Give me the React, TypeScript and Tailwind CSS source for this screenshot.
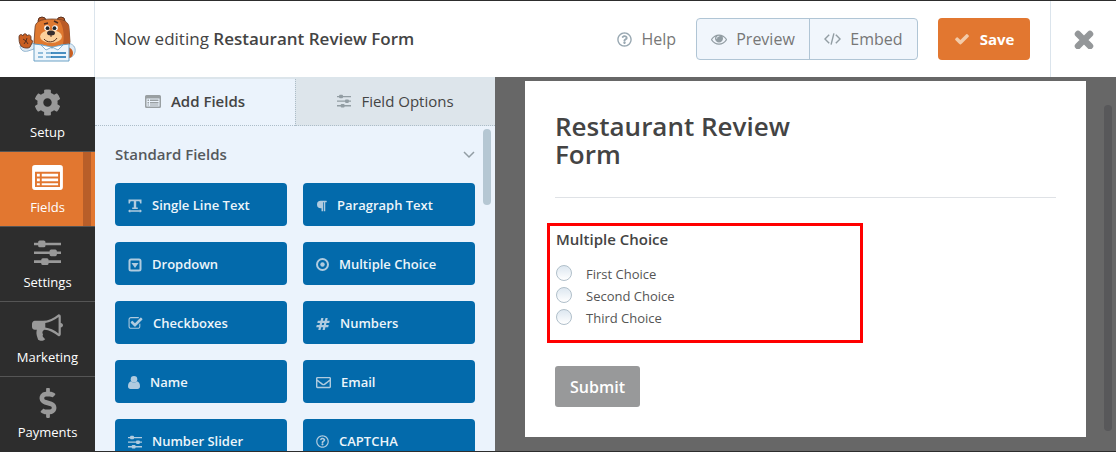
import type { ReactNode } from "react";
import { FaCog, FaDollarSign, FaParagraph, FaRegEnvelope, FaRegQuestionCircle } from "react-icons/fa";

function Glyph({ d, className }: { d: string; className: string }) {
  return (
    <svg viewBox="0 0 1792 1792" fill="currentColor" className={className} aria-hidden="true">
      <path d={d} />
    </svg>
  );
}

const EYE =
  "M1664 960q-152-236-381-353 61 104 61 225 0 185-131.5 316.5t-316.5 131.5-316.5-131.5-131.5-316.5q0-121 61-225-229 117-381 353 133 205 333.5 326.5t434.5 121.5 434.5-121.5 333.5-326.5zm-720-384q0-20-14-34t-34-14q-125 0-214.5 89.5t-89.5 214.5q0 20 14 34t34 14 34-14 14-34q0-86 61-147t147-61q20 0 34-14t14-34zm848 384q0 34-20 69-140 230-376.5 368.5t-499.5 138.5-499.5-139-376.5-368q-20-35-20-69t20-69q140-229 376.5-368t499.5-139 499.5 139 376.5 368q20 35 20 69z";
const CHECK =
  "M1671 566q0 40-28 68l-724 724-136 136q-28 28-68 28t-68-28l-136-136-362-362q-28-28-28-68t28-68l136-136q28-28 68-28t68 28l294 295 656-657q28-28 68-28t68 28l136 136q28 28 28 68z";
const CHECK_SQUARE =
  "M1472 930v318q0 119-84.5 203.5t-203.5 84.5h-832q-119 0-203.5-84.5t-84.5-203.5v-832q0-119 84.5-203.5t203.5-84.5h832q63 0 117 25 15 7 18 23 3 17-9 29l-49 49q-10 10-23 10-3 0-9-2-23-6-45-6h-832q-66 0-113 47t-47 113v832q0 66 47 113t113 47h832q66 0 113-47t47-113v-254q0-13 9-22l64-64q10-10 23-10 6 0 12 3 20 8 20 29zm231-489l-814 814q-24 24-57 24t-57-24l-430-430q-24-24-24-57t24-57l110-110q24-24 57-24t57 24l263 263 647-647q24-24 57-24t57 24l110 110q24 24 24 57t-24 57z";
const BULLHORN =
  "M1664 640q53 0 90.5 37.5t37.5 90.5-37.5 90.5-90.5 37.5v384q0 52-38 90t-90 38q-417-347-812-380-58 19-91 66t-31 100.5 40 92.5q-20 33-23 65.5t6 58 33.5 55 48 50 61.5 50.5q-29 58-111.5 83t-168.5 11.5-132-55.5q-7-23-29.5-87.5t-32-94.5-23-89-15-101 3.5-98.5 22-110.5h-122q-66 0-113-47t-47-113v-192q0-66 47-113t113-47h480q435 0 896-384 52 0 90 38t38 90v384zm-128 604v-954q-394 302-768 343v270q377 42 768 341z";
const HASH =
  "M991 1024l64-256h-254l-64 256h254zm768-504l-56 224q-7 24-31 24h-327l-64 256h311q15 0 25 12 10 14 6 28l-56 224q-5 24-31 24h-327l-81 328q-7 24-31 24h-224q-16 0-26-12-9-12-6-28l78-312h-254l-81 328q-7 24-31 24h-225q-15 0-25-12-9-12-6-28l78-312h-311q-15 0-25-12-9-12-6-28l56-224q7-24 31-24h327l64-256h-311q-15 0-25-12-10-14-6-28l56-224q5-24 31-24h327l81-328q7-24 32-24h224q15 0 25 12 9 12 6 28l-78 312h254l81-328q7-24 32-24h224q15 0 25 12 9 12 6 28l-78 312h311q15 0 25 12 9 12 6 28z";

function Cross({ className }: { className: string }) {
  return (
    <svg viewBox="0 0 20 20" className={className} aria-hidden="true">
      <path d="M4 5l12 12M16 5L4 17" stroke="currentColor" strokeWidth="6.5" strokeLinecap="round" />
    </svg>
  );
}

function Sliders({ className }: { className: string }) {
  return (
    <svg viewBox="0 0 26 26" fill="currentColor" className={className} aria-hidden="true">
      <path d="M0 3.500h26v2.500H0zM0 12h26v2.500H0zM0 20.500h26v2.500H0z" />
      <rect x="4" y="1.500" width="7" height="6.500" rx="1.500" />
      <rect x="15" y="10" width="7" height="6.500" rx="1.500" />
      <rect x="7" y="18.500" width="7" height="6.500" rx="1.500" />
    </svg>
  );
}

function ListWindow({ className }: { className: string }) {
  return (
    <svg viewBox="0 0 32 26" fill="currentColor" className={className} aria-hidden="true">
      <path
        fillRule="evenodd"
        d="M3 0h26a3 3 0 0 1 3 3v20a3 3 0 0 1-3 3H3a3 3 0 0 1-3-3V3a3 3 0 0 1 3-3zM3 7v16h26V7z"
      />
      <path d="M5 9h3v3H5zM10 9h17v3H10zM5 14h3v3H5zM10 14h17v3H10zM5 19h3v2H5zM10 19h17v2H10z" />
    </svg>
  );
}

function TextGlyph({ className }: { className: string }) {
  return (
    <svg viewBox="0 0 14 14" fill="currentColor" className={className} aria-hidden="true">
      <path d="M0.500 0.500H13.500V4.500H12.200L11.400 2.200H8.200V8.500H9.800V10H4.200V8.500H5.800V2.200H2.600L1.800 4.500H0.500z" />
      <path d="M0 12l2.200-1.800v1.100h9.600v-1.100L14 12l-2.200 1.800v-1.100H2.200v1.100z" />
    </svg>
  );
}

function DropdownGlyph({ className }: { className: string }) {
  return (
    <svg viewBox="0 0 14 14" className={className} aria-hidden="true">
      <rect x="1.500" y="1.500" width="11" height="11" rx="1.500" fill="none" stroke="currentColor" strokeWidth="2" />
      <path d="M3.500 5h7L7 10z" fill="currentColor" />
    </svg>
  );
}

function RadioGlyph({ className }: { className: string }) {
  return (
    <svg viewBox="0 0 13 13" className={className} aria-hidden="true">
      <circle cx="6.500" cy="6.500" r="5.500" fill="none" stroke="currentColor" strokeWidth="2" />
      <circle cx="6.500" cy="6.500" r="2.200" fill="currentColor" />
    </svg>
  );
}

function Person({ className }: { className: string }) {
  return (
    <svg viewBox="0 0 12 13" fill="currentColor" className={className} aria-hidden="true">
      <circle cx="6" cy="3.300" r="3.300" />
      <path d="M3 5.300C1 5.700 0 8 0 10.300 0 12 1 13 2.500 13h7c1.500 0 2.500-1 2.500-2.700C12 8 11 5.700 9 5.300 7.300 7 4.700 7 3 5.300z" />
    </svg>
  );
}

function Code({ className }: { className: string }) {
  return (
    <svg viewBox="0 0 18 14" fill="none" stroke="currentColor" strokeWidth="1.500" className={className} aria-hidden="true">
      <path d="M5.500 2.500L1 7l4.500 4.500M12.500 2.500L17 7l-4.500 4.500M10.500 1l-3 12" />
    </svg>
  );
}

function BearLogo() {
  return (
    <svg viewBox="0 0 58 46" className="h-[46px] w-[58px]" role="img" aria-label="WPForms">
      <path d="M2 30c1 5 4 6 8 5l6-2 2-6z" fill="#dfeaf3" stroke="#7ba6c6" strokeWidth=".8" />
      <path d="M50 27c5 1 8 4 7 9-1 4-4 6-8 6z" fill="#dfeaf3" stroke="#7ba6c6" strokeWidth=".8" />
      <path d="M50 31c3 1 5 3 5 6s-2 5-5 5z" fill="#c95f22" />
      <path d="M1 21c0-3 3-3 4-1 0-3 4-3 4 0 1-2 4-1 4 1v3c2 0 2 2 1 3l-2 4c-2 2-7 1-9-1-2-3-2-6-2-9z" fill="#c95f22" stroke="#573020" strokeWidth=".8" />
      <path d="M5 23l3 2-2 3M9 22l-1 3 2 3" fill="none" stroke="#573020" />
      <circle cx="24" cy="5" r="4" fill="#b75a27" stroke="#573020" />
      <circle cx="43" cy="5" r="4" fill="#b75a27" stroke="#573020" />
      <path d="M17 12c0-6 5-9 17-9s17 3 17 9l1 14c-1 5-7 8-18 8s-18-3-18-8z" fill="#df7930" stroke="#6b3c25" strokeWidth=".8" />
      <path d="M41 4c7 1 10 4 10 8l1 14c-1 3-4 5-8 6 3-9 2-22-3-28z" fill="#b95b27" />
      <ellipse cx="33" cy="20.500" rx="11" ry="6.500" fill="#fbd09a" />
      <circle cx="29" cy="12" r="2.800" fill="#fff" />
      <circle cx="37" cy="12" r="2.800" fill="#fff" />
      <circle cx="29.500" cy="12.200" r="1.900" fill="#20262b" />
      <circle cx="36.500" cy="12.200" r="1.900" fill="#20262b" />
      <path d="M26 8l4-1M36 5l4 2" stroke="#4b2b1f" strokeWidth="1.500" />
      <ellipse cx="33" cy="17" rx="4" ry="2.500" fill="#342c2d" />
      <path d="M33 19v2M26 23c3 4 10 4 13-1" fill="none" stroke="#573020" />
      <path d="M16 28l9 1 9 3 9-3 8-1v17H16z" fill="#edf5fb" stroke="#6aa1c6" />
      <path d="M23 29l5 5 6-3 6 3 5-5-11 2z" fill="#fff" stroke="#6aa1c6" strokeWidth=".8" />
      <path d="M20 37h5M20 41h5M28 37h6M28 41h6" stroke="#72a9cf" strokeWidth="1.300" />
      <path d="M33 37h15M33 41h15" stroke="#126daf" strokeWidth="1.500" />
    </svg>
  );
}

type NavItem = { label: string; icon: ReactNode; active?: boolean };

const navItems: NavItem[] = [
  { label: "Setup", icon: <FaCog className="size-[27px]" /> },
  { label: "Fields", icon: <ListWindow className="h-[25px] w-[31px]" />, active: true },
  { label: "Settings", icon: <Sliders className="size-[27px]" /> },
  { label: "Marketing", icon: <Glyph d={BULLHORN} className="size-[31px]" /> },
  { label: "Payments", icon: <FaDollarSign className="h-[30px] w-[18px]" /> },
];

const fields: { label: string; icon: ReactNode }[] = [
  { label: "Single Line Text", icon: <TextGlyph className="size-[14px]" /> },
  { label: "Paragraph Text", icon: <FaParagraph className="h-3 w-[11px]" /> },
  { label: "Dropdown", icon: <DropdownGlyph className="size-[14px]" /> },
  { label: "Multiple Choice", icon: <RadioGlyph className="size-[13px]" /> },
  { label: "Checkboxes", icon: <Glyph d={CHECK_SQUARE} className="size-[15px]" /> },
  { label: "Numbers", icon: <Glyph d={HASH} className="size-[14px]" /> },
  { label: "Name", icon: <Person className="h-[13px] w-3" /> },
  { label: "Email", icon: <FaRegEnvelope className="size-[15px]" /> },
  { label: "Number Slider", icon: <Sliders className="size-[14px]" /> },
  { label: "CAPTCHA", icon: <FaRegQuestionCircle className="size-[13px]" /> },
];

const choices = ["First Choice", "Second Choice", "Third Choice"];

function Header() {
  return (
    <header className="flex h-[76px] shrink-0 items-stretch bg-white">
      <div className="flex w-[95px] shrink-0 items-center justify-center border-r border-[#dbe4ec]">
        <BearLogo />
      </div>
      <h1 className="flex-1 self-center pl-[19px] text-[17px] text-[#444]">
        Now editing <strong className="font-semibold">Restaurant Review Form</strong>
      </h1>
      <div className="flex items-center pr-5 text-[#777]">
        <button className="mr-5 flex items-center gap-[9px]">
          <FaRegQuestionCircle className="size-[15px] text-[#99a8b2]" />
          Help
        </button>
        <div className="flex h-[42px] rounded border border-[#b0c5d5] bg-[#f1f6fc]">
          <button className="flex w-[113px] items-center justify-center gap-[9px] border-r border-[#b0c5d5]">
            <Glyph d={EYE} className="size-4 text-[#929da3]" />
            Preview
          </button>
          <button className="flex w-[107px] items-center justify-center gap-[9px]">
            <Code className="h-[14px] w-[17px] text-[#929da3]" />
            Embed
          </button>
        </div>
        <button className="ml-5 flex h-[42px] w-[92px] items-center justify-center gap-[10px] rounded bg-[#e27730] text-[15px] font-bold text-white">
          <Glyph d={CHECK} className="size-4 text-[#f3cba9]" />
          Save
        </button>
      </div>
      <button aria-label="Close" className="flex w-[66px] items-center justify-center border-l border-[#dbe4ec] text-[#949799]">
        <Cross className="size-5" />
      </button>
    </header>
  );
}

function Sidebar() {
  return (
    <nav className="w-[95px] shrink-0 bg-[#2d2d2d]">
      {navItems.map((item) => (
        <a
          key={item.label}
          href={`#${item.label.toLowerCase()}`}
          className={
            item.active
              ? "flex h-[75px] border-b border-[#555] bg-[#e27730] text-white"
              : "flex h-[75px] border-b border-[#555] text-[#999] last:border-[#2d2d2d]"
          }
        >
          <span className={item.active ? "flex flex-1 flex-col items-center pl-3" : "flex flex-1 flex-col items-center"}>
            <span className="flex h-[43px] items-center pt-2">{item.icon}</span>
            <span className="text-[13px] leading-6 text-white">{item.label}</span>
          </span>
          {item.active && <span className="mr-1 w-2 bg-[#b85e29]" />}
        </a>
      ))}
    </nav>
  );
}

function FieldsPanel() {
  return (
    <section className="flex w-[400px] shrink-0 flex-col overflow-hidden bg-[#ebf3fc]">
      <div role="tablist" className="flex h-[49px] shrink-0 border-t-2 border-[#dce5eb] text-[15px] text-[#444]">
        <button role="tab" aria-selected="true" className="flex w-1/2 items-center justify-center gap-[10px] border-b border-dotted border-[#acbdc9] pb-[2px] font-semibold">
          <ListWindow className="h-[13px] w-4 text-[#999fa2]" />
          Add Fields
        </button>
        <button role="tab" aria-selected="false" className="flex w-1/2 items-center justify-center gap-[10px] border-b border-l border-dotted border-[#acbdc9] bg-[#dde5eb] pb-[2px]">
          <Sliders className="size-[14px] text-[#929da3]" />
          Field Options
        </button>
      </div>
      <div className="flex min-h-0 flex-1 overflow-hidden">
        <div className="flex-1 pl-5">
          <button className="flex h-[57px] w-full items-center justify-between text-[15px] font-semibold text-[#55595c]">
            Standard Fields
            <svg viewBox="0 0 12 8" className="h-2 w-3" fill="none" stroke="#929da3" strokeWidth="1.500" aria-hidden="true">
              <path d="M1 1l5 5 5-5" />
            </svg>
          </button>
          <div className="grid grid-cols-2 gap-4">
            {fields.map((field) => (
              <button
                key={field.label}
                className="flex h-[43px] items-center gap-[10px] rounded bg-[#036aab] pt-[2px] pl-[13px] text-[13px] font-semibold text-[#edf5fa]"
              >
                <span className="text-[#b0cbdf]">{field.icon}</span>
                {field.label}
              </button>
            ))}
          </div>
        </div>
        <div className="flex w-5 justify-center pt-[3px] pl-1">
          <span className="h-[76px] w-2 rounded-full bg-[#b5c7d3]" />
        </div>
      </div>
    </section>
  );
}

function Preview() {
  return (
    <main className="flex min-w-0 flex-1 items-stretch bg-[#676767] pt-1 pb-[14px] pl-[30px]">
      <form className="min-w-0 flex-1 bg-white px-[30px] pt-[31px] text-[#444]">
        <h2 className="max-w-[280px] text-[26px] leading-7 font-semibold">Restaurant Review Form</h2>
        <hr className="mt-[29px] border-[#dfe2e6]" />
        <fieldset className="mt-[25px] -ml-2 h-[120px] w-[316px] border-[3px] border-[#f00] pt-px pl-[6px]">
          <div className="text-[15px] leading-6 font-semibold">Multiple Choice</div>
          <div className="mt-3">
            {choices.map((choice) => (
              <label key={choice} className="flex h-[22px] items-start gap-[14px] text-[13px] leading-[22px] text-[#555]">
                <input
                  type="radio"
                  name="choice"
                  className="mt-[2px] size-4 appearance-none rounded-full border border-[#b0bfca] bg-linear-to-b from-[#dde7f0] to-white"
                />
                {choice}
              </label>
            ))}
          </div>
        </fieldset>
        <button type="button" className="mt-[23px] h-[41px] w-[85px] rounded-[3px] bg-[#98999a] text-base font-semibold text-white">
          Submit
        </button>
      </form>
      <div className="flex w-[30px] justify-end pt-6 pr-1 pb-[6px]">
        <span className="w-2 rounded-full bg-[#58585a]" />
      </div>
    </main>
  );
}

export default function App() {
  return (
    <div className="flex h-screen flex-col overflow-hidden border-y border-[#2d2d2d] bg-white font-['Open_Sans','Noto_Sans',sans-serif]">
      <Header />
      <div className="flex min-h-0 flex-1">
        <Sidebar />
        <FieldsPanel />
        <Preview />
      </div>
    </div>
  );
}
